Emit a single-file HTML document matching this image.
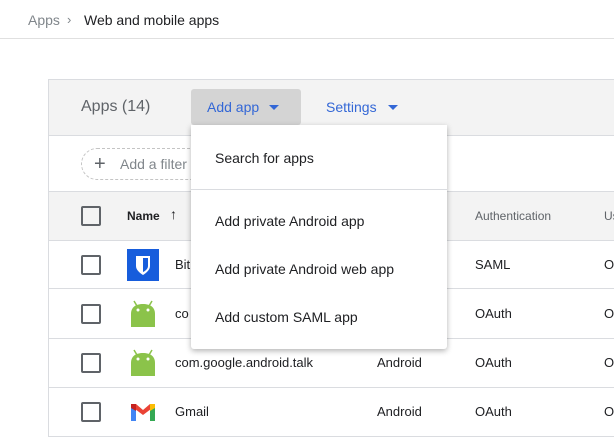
<!DOCTYPE html>
<html><head><style>
*{margin:0;padding:0;box-sizing:border-box}
body{width:614px;height:437px;overflow:hidden;background:#fff;font-family:"Liberation Sans",Roboto,sans-serif;position:relative;color:#202124}
.a{position:absolute;white-space:nowrap}
.cb{position:absolute;left:81px;width:20px;height:20px;border:2px solid #5f6368;border-radius:2px}
.hl{position:absolute;left:48px;right:0;height:1px;background:#dadce0}
.t{font-size:13px;color:#202124}
</style></head><body>
<div class="a" style="left:28px;top:12px;font-size:14px;color:#80868b">Apps</div>
<div class="a" style="left:67px;top:12px;font-size:13px;color:#80868b">›</div>
<div class="a" style="left:84px;top:12px;font-size:14px;color:#202124">Web and mobile apps</div>
<div class="a" style="left:0;right:0;top:38px;height:1px;background:#e0e0e0"></div>

<div class="a" style="left:48px;right:0;top:79px;height:358px;border-left:1px solid #dadce0;border-top:1px solid #dadce0"></div>
<div class="a" style="left:49px;right:0;top:80px;height:55px;background:#f3f3f3"></div>
<div class="hl" style="top:135px"></div>
<div class="a" style="left:81px;top:98px;font-size:16px;color:#5f6368">Apps (14)</div>
<div class="a" style="left:191px;top:89px;width:110px;height:36px;background:#d4d4d4;border-radius:3px"></div>
<div class="a" style="left:207px;top:99px;font-size:14px;color:#3367d6">Add app</div>
<div class="a" style="left:269px;top:105px;width:0;height:0;border-left:5px solid transparent;border-right:5px solid transparent;border-top:5px solid #3367d6"></div>
<div class="a" style="left:326px;top:99px;font-size:14px;color:#3367d6">Settings</div>
<div class="a" style="left:388px;top:105px;width:0;height:0;border-left:5px solid transparent;border-right:5px solid transparent;border-top:5px solid #3367d6"></div>

<div class="a" style="left:81px;top:148px;width:140px;height:32px;border:1px dashed #c4c4c4;border-radius:16px"></div>
<div class="a" style="left:94px;top:155px;font-size:20px;line-height:18px;color:#5f6368">+</div>
<div class="a" style="left:120px;top:156px;font-size:14px;color:#80868b">Add a filter</div>
<div class="hl" style="top:191px"></div>
<div class="a" style="left:49px;right:0;top:192px;height:48px;background:#f3f3f3"></div>
<div class="cb" style="top:206px"></div>
<div class="a" style="left:127px;top:209px;font-size:12px;font-weight:bold;color:#202124">Name</div>
<div class="a" style="left:170px;top:206px;font-size:14px;color:#202124">↑</div>
<div class="a" style="left:475px;top:209px;font-size:12px;color:#5f6368">Authentication</div>
<div class="a" style="left:604px;top:209px;font-size:12px;color:#5f6368">Us</div>
<div class="hl" style="top:240px"></div>

<div class="cb" style="top:255px"></div>
<div class="a" style="left:127px;top:249px;width:32px;height:32px;background:#175ddc"></div>
<svg class="a" style="left:127px;top:249px" width="32" height="32"><path d="M9 7H23V17C23 21 19 24 16 26C13 24 9 21 9 17Z" fill="#fff"/><path d="M16 9H21V17C21 20 18 22 16 23Z" fill="#175ddc"/></svg>
<div class="a t" style="left:175px;top:257px">Bit</div>
<div class="a t" style="left:475px;top:257px">SAML</div>
<div class="a t" style="left:604px;top:257px">O</div>
<div class="hl" style="top:288px"></div>

<div class="cb" style="top:304px"></div>
<svg class="a" style="left:129px;top:298px" width="28" height="30"><path d="M5 3L8 8M23 3L20 8" stroke="#8bc34a" stroke-width="1.5"/><path d="M2 16C2 9 7 6 14 6C21 6 26 9 26 16V29H2Z" fill="#8bc34a"/><circle cx="9" cy="12" r="1.5" fill="#fff"/><circle cx="19" cy="12" r="1.5" fill="#fff"/></svg>
<div class="a t" style="left:175px;top:306px">co</div>
<div class="a t" style="left:475px;top:306px">OAuth</div>
<div class="a t" style="left:604px;top:306px">O</div>
<div class="hl" style="top:338px"></div>

<div class="cb" style="top:353px"></div>
<svg class="a" style="left:129px;top:347px" width="28" height="30"><path d="M5 3L8 8M23 3L20 8" stroke="#8bc34a" stroke-width="1.5"/><path d="M2 16C2 9 7 6 14 6C21 6 26 9 26 16V29H2Z" fill="#8bc34a"/><circle cx="9" cy="12" r="1.5" fill="#fff"/><circle cx="19" cy="12" r="1.5" fill="#fff"/></svg>
<div class="a t" style="left:175px;top:355px">com.google.android.talk</div>
<div class="a t" style="left:377px;top:355px">Android</div>
<div class="a t" style="left:475px;top:355px">OAuth</div>
<div class="a t" style="left:604px;top:355px">O</div>
<div class="hl" style="top:387px"></div>

<div class="cb" style="top:402px"></div>
<svg class="a" style="left:130px;top:402px" width="26" height="19"><path d="M1 4V19H6V8Z" fill="#4285f4"/><path d="M25 4V19H20V8Z" fill="#34a853"/><path d="M1 4L13 13L25 4L25 2L20 2L13 8L6 2L1 2Z" fill="#ea4335"/><path d="M20 2L25 2V6L20 9Z" fill="#fbbc04"/><path d="M1 2H6V9L1 6Z" fill="#c5221f"/></svg>
<div class="a t" style="left:175px;top:404px">Gmail</div>
<div class="a t" style="left:377px;top:404px">Android</div>
<div class="a t" style="left:475px;top:404px">OAuth</div>
<div class="a t" style="left:604px;top:404px">O</div>
<div class="hl" style="top:436px"></div>

<div class="a" style="left:191px;top:125px;width:256px;height:224px;background:#fff;border-radius:0 0 3px 3px;box-shadow:0 2px 6px rgba(0,0,0,.3)"></div>
<div class="a" style="left:215px;top:150px;font-size:14px;color:#202124">Search for apps</div>
<div class="a" style="left:191px;top:189px;width:256px;height:1px;background:#dadce0"></div>
<div class="a" style="left:215px;top:213px;font-size:14px;color:#202124">Add private Android app</div>
<div class="a" style="left:215px;top:261px;font-size:14px;color:#202124">Add private Android web app</div>
<div class="a" style="left:215px;top:309px;font-size:14px;color:#202124">Add custom SAML app</div>
</body></html>
